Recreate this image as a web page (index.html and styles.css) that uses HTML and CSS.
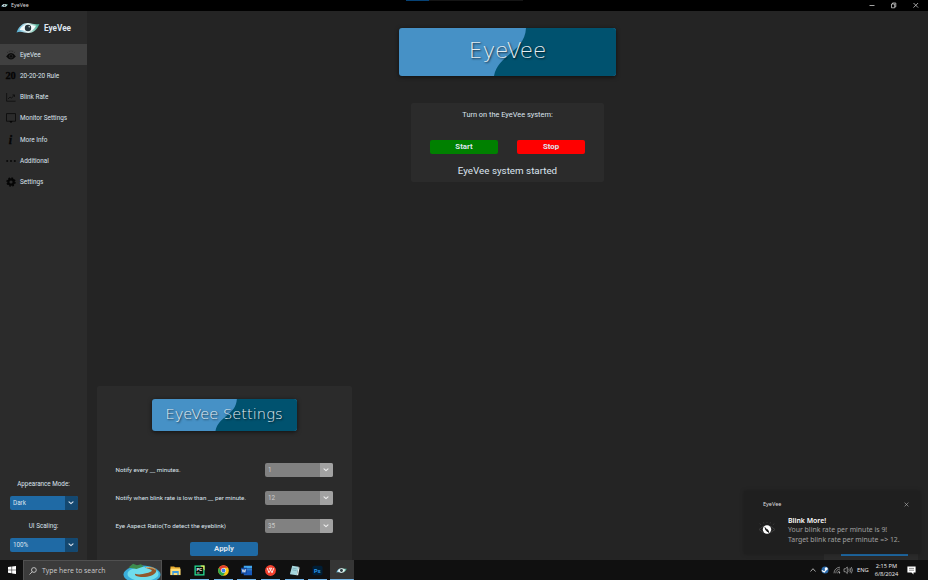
FILE: index.html
```html
<!DOCTYPE html>
<html lang="en">
<head>
<meta charset="utf-8">
<title>EyeVee</title>
<link rel="stylesheet" href="styles.css">
</head>
<body>
<svg class="defs" width="0" height="0" aria-hidden="true">
  <defs>
    <linearGradient id="lid" x1="0" y1="0" x2="1" y2="0"><stop offset="0" stop-color="#4aa9cf"/><stop offset=".5" stop-color="#e4f3f2"/><stop offset="1" stop-color="#38a58a"/></linearGradient>
    <symbol id="logo" viewBox="0 0 24 12">
      <path d="M.5 10.500C3 4 7 .8 12 1c4 .2 6 2 11.500 1C21 8 17 11 12.500 11 8 11 5 8.500.5 10.500z" fill="url(#lid)"/>
      <path d="M3.500 8C6 4 8.500 2.600 12 2.600c3 0 5 1.300 8 1.200C18 7.500 15.500 9.600 12.500 9.600 9 9.600 7 7.500 3.500 8z" fill="#f4fbfb"/>
      <circle cx="12" cy="6" r="3.200" fill="#26343b"/><circle cx="13.200" cy="4.700" r=".7" fill="#dfeff0"/>
    </symbol>
    <symbol id="chev" viewBox="0 0 6 4"><path d="M1 .9 3 2.700 5 .9" fill="none" stroke="currentColor" stroke-width="1.100" stroke-linecap="round" stroke-linejoin="round"/></symbol>
  </defs>
</svg>
<div class="screen">
  <header class="titlebar">
    <svg class="title-icon"><use href="#logo"/></svg>
    <span class="title-text">EyeVee</span>
    <div class="snap"><i></i></div>
    <svg class="win-controls" viewBox="0 0 52 11" fill="none" stroke="#ccc" stroke-width=".8">
      <path d="M1.500 5.500h5"/><path d="M23.500 4h3.200v3.800h-3.200zM24.500 4V3h3.300v3.800h-1"/><path d="m45.500 3 4.600 4.600m0-4.600-4.600 4.600"/>
    </svg>
  </header>

  <div class="body">
    <aside class="sidebar">
      <div class="brand"><svg class="brand-logo"><use href="#logo"/></svg><span>EyeVee</span></div>
      <nav class="nav">
        <a class="item active"><svg class="ico" viewBox="0 0 10 10"><path d="M.1 6.500Q5-.3 9.900 6.500 5 12.300.1 6.500z" fill="#0b0b0b"/><circle cx="5" cy="6.300" r="1.700" fill="none" stroke="#3a3a3a" stroke-width=".5"/><path d="M1.200 1.800l.7 1.200M3.200.7l.3 1.300M5 .3v1.500M6.800.7l-.3 1.300M8.800 1.800l-.7 1.200" stroke="#1c1c1c" stroke-width=".5"/></svg>EyeVee</a>
        <a class="item"><span class="ico twenty">20</span>20-20-20 Rule</a>
        <a class="item"><svg class="ico" viewBox="0 0 10 10" fill="none" stroke="#0c0c0c" stroke-width=".8"><path d="M.6 1v8.200h9M2 7l2-2 1.500 1.200L8.300 3M6.500 2.900h2v2"/></svg>Blink Rate</a>
        <a class="item"><svg class="ico" viewBox="0 0 10 10"><path d="M.5.600h9v7.600h-9z" fill="none" stroke="#0c0c0c" stroke-width=".9"/><path d="M3.300 8.300h3.400L5 10z" fill="#000"/></svg>Monitor Settings</a>
        <a class="item"><span class="ico info">i</span>More Info</a>
        <a class="item"><svg class="ico" viewBox="0 0 10 10" fill="#080808"><circle cx="1.200" cy="5" r="1"/><circle cx="5" cy="5" r="1"/><circle cx="8.800" cy="5" r="1"/></svg>Additional</a>
        <a class="item"><svg class="ico" viewBox="0 0 10 10"><circle cx="5" cy="5" r="2.700" fill="none" stroke="#050505" stroke-width="2.200"/><circle cx="5" cy="5" r="4" fill="none" stroke="#050505" stroke-width="1.400" stroke-dasharray="1.700 1.440"/></svg>Settings</a>
      </nav>
      <div class="prefs">
        <span class="pref-label">Appearance Mode:</span>
        <div class="select blue"><span>Dark</span><b><svg><use href="#chev"/></svg></b></div>
        <span class="pref-label second">UI Scaling:</span>
        <div class="select blue"><span>100%</span><b><svg><use href="#chev"/></svg></b></div>
      </div>
    </aside>

    <main class="main">
      <section class="hero">
        <div class="banner large">
          <svg viewBox="0 0 217 48" preserveAspectRatio="none"><path d="M127 0C126 24 99 26 95 48H217V0z" fill="#00526f"/></svg>
          <span>EyeVee</span>
        </div>
        <div class="card">
          <p class="prompt">Turn on the EyeVee system:</p>
          <div class="buttons"><button class="btn start">Start</button><button class="btn stop">Stop</button></div>
          <p class="status">EyeVee system started</p>
        </div>
      </section>
      <section class="settings">
        <div class="banner small">
          <svg viewBox="0 0 217 48" preserveAspectRatio="none"><path d="M127 0C126 24 99 26 95 48H217V0z" fill="#00526f"/></svg>
          <span>EyeVee Settings</span>
        </div>
        <div class="rows">
          <div class="row"><label>Notify every __ minutes.</label><div class="select grey"><span>1</span><b><svg><use href="#chev"/></svg></b></div></div>
          <div class="row"><label>Notify when blink rate is low than __ per minute.</label><div class="select grey"><span>12</span><b><svg><use href="#chev"/></svg></b></div></div>
          <div class="row"><label>Eye Aspect Ratio(To detect the eyeblink)</label><div class="select grey"><span>35</span><b><svg><use href="#chev"/></svg></b></div></div>
        </div>
        <button class="btn apply">Apply</button>
      </section>
    </main>
  </div>

  <footer class="taskbar">
    <div class="tb-start"><svg viewBox="0 0 8 8" fill="#fff"><path d="M0 1.100 3.600.6v3.100H0zM4.100.5 8 0v3.700H4.100zM0 4.200h3.600v3.100L0 6.800zM4.100 4.200H8V8l-3.900-.6z"/></svg></div>
    <div class="search">
      <svg class="mag" viewBox="0 0 8 8" fill="none" stroke="#ddd" stroke-width=".8"><circle cx="4.900" cy="3" r="2.400"/><path d="M3.200 4.800.5 7.500"/></svg>
      <span>Type here to search</span>
      <svg class="island" viewBox="0 0 38 17">
        <ellipse cx="19" cy="11.500" rx="18.500" ry="9" fill="#3aaedb"/><ellipse cx="20" cy="11" rx="15.500" ry="7" fill="#6fdcec"/>
        <path d="M5.500 4.500 10 .8l4 1.500 4-1 2.500 2.200-7 2.500z" fill="#3d8c4e"/>
        <path d="M22 4.500c8-1 12.500 1 11 4.500s-9 5.500-15 5c-4-.3-6.500-1.500-6-3.200 3 1 7 .8 12-.7 4-1.200 6-2.300 4-3.400-1.500-.8-3.500-1.200-6-2.200z" fill="#91572c"/>
        <path d="M23 4.600c5-.3 9 .7 9.500 2.500" fill="none" stroke="#e3bd78" stroke-width=".9"/>
      </svg>
    </div>
    <div class="apps">
      <div class="app"><svg viewBox="0 0 12 12"><path d="M.5 1.500h4l1 1H11V11H.5z" fill="#e9ac2f"/><path d="M.5 4H11.500v7H.5z" fill="#ffdc74"/><path d="M2.500 6.500h7V11H8V8.800H4V11H2.500z" fill="#3c9bdf"/></svg></div>
      <div class="app open"><svg viewBox="0 0 12 12"><path d="M.5.5h11v11H.5z" fill="#23d18b"/><path d="M7 .5h4.500V6z" fill="#e9f15c"/><path d="M2 2h8v8H2z" fill="#071008"/><text x="2.600" y="6.800" font-size="4.800" font-weight="700" fill="#fff" font-family="Roboto, sans-serif">PC</text><path d="M3 8.700h3" stroke="#fff" stroke-width=".8"/></svg></div>
      <div class="app open"><svg viewBox="0 0 12 12"><circle cx="6" cy="6" r="5.800" fill="#fbc916"/><path d="M1 3.100A5.800 5.800 0 0 1 11 3.100H6L3.500 7.500z" fill="#e33b2e"/><path d="M1 3.100a5.800 5.800 0 0 0 4.500 8.700L8.300 7.300 3.600 7.500z" fill="#2da94f"/><circle cx="6" cy="6" r="2.700" fill="#fff"/><circle cx="6" cy="6" r="2.100" fill="#3b7ded"/></svg></div>
      <div class="app open"><svg viewBox="0 0 12 12"><path d="M3 .8h9v3H3z" fill="#41a5ee"/><path d="M3 3.800h9v2.600H3z" fill="#2b7cd3"/><path d="M3 6.400h9v4.800H3z" fill="#185abd"/><path d="M0 3h6.500v6.500H0z" fill="#1049a0"/><path d="m1.200 4.500 1 3.500 1-3 1 3 1-3.500" fill="none" stroke="#fff" stroke-width=".8"/></svg></div>
      <div class="app open"><svg viewBox="0 0 12 12"><circle cx="6" cy="6" r="5.900" fill="#f4412f"/><path d="M2.500 3.500 4.300 8.500 6 5.500l1.700 3 1.800-5M4.500 3.500h3L6 5.500z" fill="none" stroke="#fff" stroke-width="1"/></svg></div>
      <div class="app open"><svg viewBox="0 0 12 12"><path d="M3.500.8 10.500 2 8.500 11.300 1 10z" fill="#a7d6dd"/><path d="m10.500 2 1 1-1.500 8.300H8.500z" fill="#e7f0ed"/><path d="m4 3.500 4.500.8M3.600 5.300l4.500.8" stroke="#538b98" stroke-width=".5"/></svg></div>
      <div class="app open"><svg viewBox="0 0 12 12"><rect x=".5" y=".8" width="11" height="10.400" rx="1.800" fill="#001e36"/><text x="2.200" y="8.300" font-size="6.200" font-weight="700" fill="#2b9df0" font-family="Roboto, sans-serif">Ps</text></svg></div>
      <div class="app open current"><svg viewBox="0 0 12 12"><use href="#logo" y="3" width="12" height="6"/></svg></div>
    </div>
    <div class="tray">
      <svg class="tray-icons" viewBox="0 0 44 12" fill="none" stroke="#ccc" stroke-width=".8">
        <path d="m1.500 7.500 2.500-2.800L6.500 7.500"/>
        <circle cx="16" cy="6" r="3.500" fill="#2c6cae" stroke="none"/><circle cx="17.200" cy="4.800" r="1.500" fill="#fff" stroke="none"/><path d="m12.800 6.600 2.500 1.400 2-2.500" stroke="#fff" stroke-width="1.200"/>
        <path d="M25 9.300A6 6 0 0 1 31 3.200M26.800 9.300A4.200 4.200 0 0 1 31 5M28.600 9.300A2.400 2.400 0 0 1 31 7" stroke="#aaa" stroke-width=".7"/><circle cx="30.500" cy="8.800" r=".7" fill="#ccc" stroke="none"/>
        <path d="M35 4.800h1.300L38.300 3v6.500l-2-1.800H35zM39.700 4.700q1 1.500 0 3M41 3.800q1.700 2.400 0 4.800M42.300 3q2.300 3.200 0 6.400" stroke-width=".6"/>
      </svg>
      <span class="lang">ENG</span>
      <div class="clock"><span>2:15 PM</span><span>6/8/2024</span></div>
      <svg class="note" viewBox="0 0 9 9"><path d="M.4.5h8.200v6H6.500v2l-2-2H.4z" fill="#fff"/><path d="M2 2.400h5M2 4.200h5" stroke="#444" stroke-width=".6"/></svg>
    </div>
  </footer>

  <div class="under"><i></i></div>
  <div class="toast">
    <div class="toast-head"><span>EyeVee</span><svg viewBox="0 0 6 6"><path d="m.7.7 4.600 4.600m0-4.600L.7 5.300" stroke="#bbb" stroke-width=".7"/></svg></div>
    <div class="toast-body">
      <svg class="toast-eye" viewBox="0 0 18 14"><path d="M1 7.500Q9-.5 17 7.500 9 15 1 7.500z" fill="none" stroke="#3c3c3c" stroke-width="1"/><path d="M3 3 1.800 1.500M6 1.600 5.500.2M9 1V0M12 1.600l.5-1.400M15 3l1.200-1.500" stroke="#3c3c3c" stroke-width=".8"/><circle cx="9" cy="7.500" r="4.200" fill="#fff"/><path d="M7 5.500q.3 3.500 4 5l-1.300-2.700q-2-.3-2.700-2.300z" fill="#161616" stroke="#161616" stroke-width=".8"/></svg>
      <div class="toast-text"><strong>Blink More!</strong><span>Your blink rate per minute is 9!</span><span>Target blink rate per minute =&gt; 12.</span></div>
    </div>
  </div>
</div>
</body>
</html>
```
FILE: styles.css
```css
* { box-sizing: border-box; }
body { margin: 0; background: #242424; font-family: Roboto, "Liberation Sans", sans-serif; color: #dce4ee; }
p { margin: 0; }
button { border: 0; padding: 0; font: inherit; color: inherit; }
svg { display: block; }
.defs { position: absolute; }
.screen { position: relative; width: 928px; height: 580px; overflow: hidden; display: flex; flex-direction: column; white-space: nowrap; }

.titlebar { height: 11px; background: #000; display: flex; align-items: center; flex: none; }
.title-icon { width: 7px; height: 5px; margin-left: 1px; }
.title-text { margin-left: 3px; font: 5.3px/11px "Noto Sans", sans-serif; color: #ddd; width: 30px; }
.snap { align-self: flex-start; margin-left: 365px; width: 117px; height: 1px; background: #151515; }
.snap i { display: block; width: 23px; height: 1px; background: #064275; }
.win-controls { width: 52px; height: 11px; margin-left: auto; margin-right: 8px; }

.body { flex: 1; display: flex; min-height: 0; }
.sidebar { width: 87px; background: #2b2b2b; display: flex; flex-direction: column; }
.brand { height: 33px; display: flex; align-items: center; padding-left: 16px; gap: 4px; font-size: 8.2px; font-weight: 700; }
.brand-logo { width: 24px; height: 12px; }
.item { height: 21.25px; display: flex; align-items: center; padding-left: 5.5px; gap: 4.5px; font-size: 6.4px; color: #dce4ee; }
.item.active { background: #404040; }
.ico { width: 10px; height: 10px; flex: none; }
.twenty { font: 700 10.5px/10px "Liberation Serif", serif; letter-spacing: -.2px; color: #050505; -webkit-text-stroke: .3px #050505; }
.info { font: italic 700 12px/10px "Liberation Serif", serif; color: #050505; text-align: center; -webkit-text-stroke: .3px #050505; }
.prefs { margin-top: auto; padding: 0 9.5px 8.5px; display: flex; flex-direction: column; }
.pref-label { text-align: center; font-size: 6.3px; line-height: 10px; margin-bottom: 6.5px; }
.pref-label.second { margin-top: 11.5px; }

.select { width: 68px; height: 14px; display: flex; border-radius: 2px; overflow: hidden; font-size: 6.3px; line-height: 14px; flex: none; }
.select span { flex: 1; padding-left: 3.5px; }
.select b { width: 13px; display: flex; align-items: center; justify-content: center; }
.select svg { width: 6px; height: 4px; }
.blue { background: #1f6aa5; }
.blue b { background: #144870; }
.grey { background: #818181; color: #ccc; }
.grey b { background: #a2a2a2; color: #eee; }

.main { flex: 1; display: flex; flex-direction: column; }
.hero { display: flex; flex-direction: column; align-items: center; padding-top: 17px; }
.banner { display: grid; place-items: center; border-radius: 3px; overflow: hidden; background: #4691c6; box-shadow: 0 1px 4px #0009; }
.banner > * { grid-area: 1 / 1; }
.banner svg { width: 100%; height: 100%; }
.banner span { align-self: start; font-family: "DejaVu Sans Light", "DejaVu Sans", sans-serif; font-weight: 200; color: #e3edf2; text-shadow: 1px 1px 2px #000b; }
.large { width: 217px; height: 48px; }
.large span { font-size: 21.5px; line-height: 45px; }
.small { width: 145px; height: 32px; }
.small span { font-size: 14.7px; line-height: 30px; }
.card { width: 193px; height: 79px; margin-top: 27px; background: #2b2b2b; border-radius: 2px; display: flex; flex-direction: column; align-items: center; }
.prompt { font-size: 7.4px; line-height: 12px; margin-top: 6px; }
.buttons { display: flex; gap: 19px; margin-top: 19px; }
.btn { width: 68px; height: 14px; border-radius: 2px; font-size: 7.8px; font-weight: 700; line-height: 14px; }
.start { background: #008000; }
.stop { background: #f00; }
.status { font-size: 9.8px; line-height: 14px; margin-top: 10px; }

.settings { width: 255px; margin: auto 0 0 9.5px; height: 174px; background: #2b2b2b; border-radius: 2px 2px 0 0; display: flex; flex-direction: column; align-items: center; padding-top: 12.5px; }
.rows { align-self: stretch; display: flex; flex-direction: column; gap: 14px; margin-top: 32px; padding: 0 19px; }
.row { display: flex; justify-content: space-between; align-items: center; font-size: 6.2px; }
.apply { background: #1f6aa5; margin-top: 9.5px; }

.taskbar { height: 20px; flex: none; background: #101010; display: flex; font-family: "Open Sans", sans-serif; }
.tb-start { width: 23px; display: grid; place-items: center; }
.tb-start svg { width: 8px; height: 8px; }
.search { width: 139px; background: #3b3b3b; border: 1px solid #505050; border-bottom: 0; display: flex; align-items: center; padding-left: 5px; font-size: 6.9px; color: #ccc; }
.mag { width: 8px; height: 8px; margin-right: 5px; }
.island { width: 38px; height: 17px; margin-left: auto; align-self: flex-end; }
.apps { display: flex; padding-left: 2px; }
.app { width: 23.7px; display: grid; place-items: center; }
.app svg { width: 11px; height: 11px; }
.open { background: linear-gradient(#76b9ed, #76b9ed) center bottom / 19px 1px no-repeat; }
.current { background-color: #353535; background-size: 100% 1px; }
.tray { margin-left: auto; display: flex; align-items: center; padding-right: 12px; color: #eee; }
.tray-icons { width: 44px; height: 12px; }
.lang { font-size: 5.8px; width: 13px; margin-left: 4px; }
.clock { width: 27px; margin: 0 7px 0 3px; display: flex; flex-direction: column; align-items: center; font-size: 5.7px; line-height: 8.5px; }
.note { width: 9px; height: 9px; }

.under { position: absolute; left: 824px; top: 554px; width: 94px; height: 6px; background: #2b2b2b; }
.under i { display: block; width: 67px; height: 2px; margin-left: 17px; background: #1f6aa5; }
.toast { position: absolute; left: 744px; top: 491px; width: 176px; height: 63px; background: #1f1f1f; box-shadow: 0 0 4px #0004; font-family: "Noto Sans", sans-serif; }
.toast-head { display: flex; justify-content: space-between; align-items: center; padding: 8px 11px 0 19px; font-size: 5.5px; line-height: 10px; color: #ddd; }
.toast-head svg { width: 5px; height: 5px; }
.toast-body { display: flex; padding: 6.5px 0 0 14px; }
.toast-eye { width: 18px; height: 14px; margin: 6px 12px 0 0; }
.toast-text { display: flex; flex-direction: column; font-size: 6.9px; line-height: 9.7px; color: #a0a0a0; }
.toast-text strong { color: #fff; font-weight: 600; }
```
